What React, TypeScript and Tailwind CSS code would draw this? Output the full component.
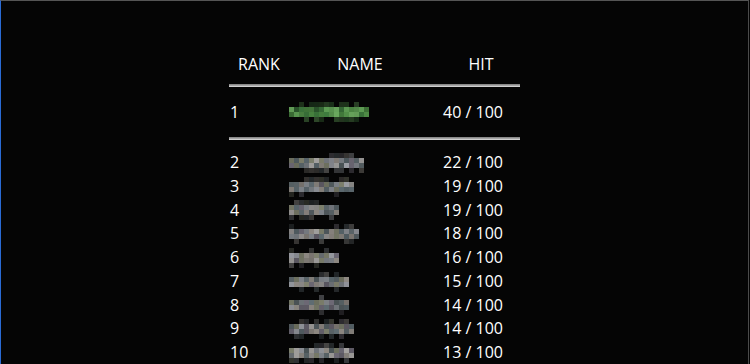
import React from "react";

type Row = { rank: number; cols: number; hit: number; green?: boolean };

const rows: Row[] = [
  { rank: 1, cols: 16, hit: 40, green: true },
  { rank: 2, cols: 15, hit: 22 },
  { rank: 3, cols: 13, hit: 19 },
  { rank: 4, cols: 10, hit: 19 },
  { rank: 5, cols: 14, hit: 18 },
  { rank: 6, cols: 10, hit: 16 },
  { rank: 7, cols: 12, hit: 15 },
  { rank: 8, cols: 12, hit: 14 },
  { rank: 9, cols: 13, hit: 14 },
  { rank: 10, cols: 13, hit: 13 },
];

const greys = ["#7d8288", "#8f8a84", "#5f6c72", "#7f826f", "#9a9da4", "#6e6a76", "#a4a2a0", "#5a6468"];
const greens = ["#3f7d3f", "#529048", "#2f5d30", "#5f9f55", "#47823f", "#6aa85e"];

// small seeded generator so the mosaic is the same every render
function rng(seed: number) {
  let s = seed;
  return () => {
    s = (s * 1103515245 + 12345) % 2147483648;
    return s / 2147483648;
  };
}

function Mosaic({ cols, green, seed }: { cols: number; green?: boolean; seed: number }) {
  const r = rng(seed * 97 + 13);
  const pal = green ? greens : greys;
  const cells: React.ReactNode[] = [];
  for (let x = 0; x < cols; x++) {
    for (let y = 0; y < 4; y++) {
      const edge = y === 0 || y === 3;
      if (edge && r() < 0.6) continue;
      const fill = pal[Math.floor(r() * pal.length)];
      const op = edge ? 0.25 + r() * 0.15 : 0.8 + r() * 0.2;
      cells.push(<rect key={`${x}-${y}`} x={x * 5} y={y * 5} width={5} height={5} fill={fill} opacity={op} />);
    }
  }
  return (
    <svg width={cols * 5} height={20} className="block">
      {cells}
    </svg>
  );
}

function Rule() {
  return <div className="h-[3px] w-full border-t border-t-[#8a8a8a] bg-[#a6a6a6] border-b border-b-[#cfcfcf]" />;
}

export default function App() {
  return (
    <div className="h-[364px] w-[750px] bg-[#050505]">
      <div className="h-full w-[749px] overflow-hidden border-l border-l-[#2a6bd4] border-t border-t-[#555555] border-r border-r-[#4a4a4a] pt-[51px] font-['Open_Sans',sans-serif] text-[16px] text-white">
        <div className="mx-auto w-[291px]">
          {/* header */}
          <div className="grid h-[24px] grid-cols-[60px_153px_78px] leading-[24px]">
            <div className="text-center">RANK</div>
            <div className="pr-[11px] text-center">NAME</div>
            <div className="text-center">HIT</div>
          </div>
          <div className="mt-[8px]">
            <Rule />
          </div>

          {/* first place */}
          <div className="mt-[13px] grid h-[24px] grid-cols-[60px_153px_78px] items-center leading-[24px]">
            <div className="pl-[1px]">1</div>
            <div className="flex items-center">
              <Mosaic cols={rows[0].cols} green seed={1} />
            </div>
            <div className="pl-[1px]">{rows[0].hit} / 100</div>
          </div>
          <div className="mt-[13px]">
            <Rule />
          </div>

          {/* the rest */}
          <div className="mt-[11px]">
            {rows.slice(1).map((r) => (
              <div key={r.rank} className="grid h-[23.75px] grid-cols-[60px_153px_78px] items-center leading-[23.75px]">
                <div className="pl-[1px]">{r.rank}</div>
                <div className="flex items-center">
                  <Mosaic cols={r.cols} seed={r.rank} />
                </div>
                <div className="pl-[1px]">{r.hit} / 100</div>
              </div>
            ))}
          </div>
        </div>
      </div>
    </div>
  );
}
